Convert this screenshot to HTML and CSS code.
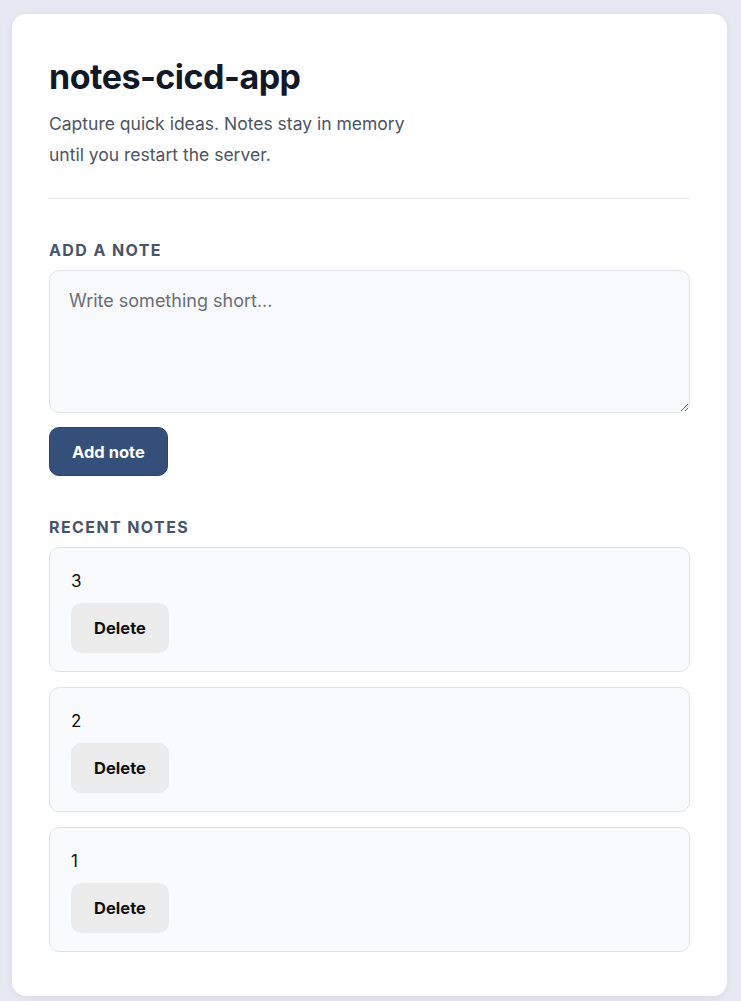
FILE: index.html
```html
<!DOCTYPE html>
<html lang="en">
<head>
    <meta charset="UTF-8">
    <meta name="viewport" content="width=device-width, initial-scale=1.0">
    <title>notes-cicd-app</title>
    <link rel="stylesheet" href="styles.css">
</head>
<body>
    <main class="card">
        <!-- Header -->
        <header class="header">
            <h1>notes-cicd-app</h1>
            <p class="subtitle">Capture quick ideas. Notes stay in memory until you restart the server.</p>
        </header>

        <!-- New note form -->
        <section class="section">
            <h2 class="label">Add a note</h2>
            <form class="note-form" onsubmit="return false;">
                <textarea placeholder="Write something short..."></textarea>
                <button type="submit" class="btn-primary">Add note</button>
            </form>
        </section>

        <!-- Notes list -->
        <section class="section">
            <h2 class="label">Recent notes</h2>
            <ul class="notes">
                <li class="note">
                    <span class="note-text">3</span>
                    <button class="btn-delete">Delete</button>
                </li>
                <li class="note">
                    <span class="note-text">2</span>
                    <button class="btn-delete">Delete</button>
                </li>
                <li class="note">
                    <span class="note-text">1</span>
                    <button class="btn-delete">Delete</button>
                </li>
            </ul>
        </section>
    </main>
</body>
</html>
```

FILE: styles.css
```css
/* Page */
body {
    margin: 0;
    background-color: #e6e9f1;
    font-family: Inter, "Noto Sans", Arial, sans-serif;
    color: #111827;
    padding: 14px 14px 6px 12px;
}

/* Main card */
.card {
    background-color: #fff;
    border-radius: 14px;
    padding: 42px 37px 44px 37px;
    box-shadow: 0 2px 8px rgba(15, 23, 42, 0.06);
}

.header {
    border-bottom: 1px solid #e2e5ee;
    padding-bottom: 28px;
    margin-bottom: 41px;
}

h1 {
    margin: 0 0 10px;
    font-size: 34px;
    font-weight: 700;
    letter-spacing: -0.5px;
    line-height: 42px;
    color: #111827;
}

.subtitle {
    margin: 0;
    max-width: 375px;
    font-size: 17.5px;
    line-height: 31px;
    color: #4b5563;
}

.section {
    margin-bottom: 41px;
}

.section:last-child {
    margin-bottom: 0;
}

/* Section labels */
.label {
    margin: 0 0 10px;
    font-size: 16px;
    font-weight: 700;
    letter-spacing: 1.4px;
    text-transform: uppercase;
    color: #475569;
    line-height: 20px;
}

/* Form */
.note-form {
    display: flex;
    flex-direction: column;
    align-items: flex-start;
    gap: 14px;
}

textarea {
    width: 100%;
    height: 143px;
    box-sizing: border-box;
    padding: 19px 19px;
    background-color: #f8f9fb;
    border: 1px solid #e0e3ea;
    border-radius: 10px;
    font-family: inherit;
    font-size: 18px;
    color: #111827;
}

textarea::placeholder {
    color: #6b6f76;
}

.btn-primary {
    background-color: #34507a;
    color: #fff;
    border: 1px solid #2c4468;
    border-radius: 10px;
    padding: 0 22px;
    height: 49px;
    font-family: inherit;
    font-size: 16.5px;
    font-weight: 700;
    cursor: pointer;
}

/* Notes */
.notes {
    list-style: none;
    margin: 0;
    padding: 0;
    display: flex;
    flex-direction: column;
    gap: 15px;
}

.note {
    display: flex;
    flex-direction: column;
    align-items: flex-start;
    gap: 10px;
    padding: 21px 21px 18px;
    background-color: #f9fafc;
    border: 1px solid #e0e3ec;
    border-radius: 10px;
}

.note-text {
    font-size: 17px;
    line-height: 24px;
    color: #111;
}

.btn-delete {
    background-color: #ececec;
    color: #111;
    border: none;
    border-radius: 10px;
    width: 98px;
    height: 50px;
    font-family: inherit;
    font-size: 16.5px;
    font-weight: 700;
    cursor: pointer;
}
```
